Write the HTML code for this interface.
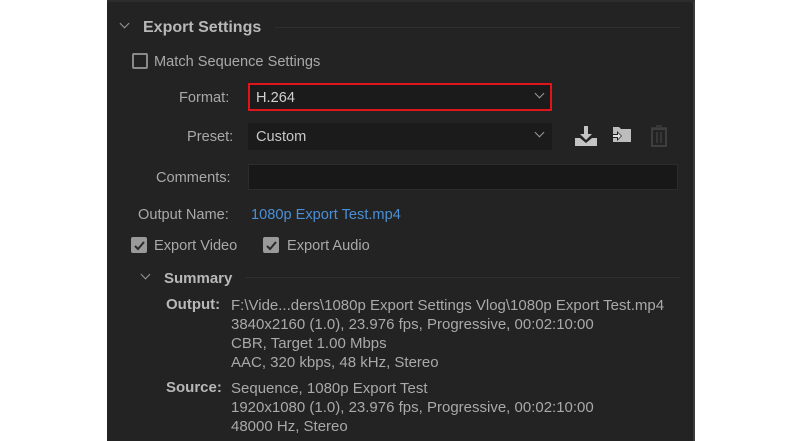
<!DOCTYPE html>
<html><head><meta charset="utf-8"><style>
*{margin:0;padding:0;box-sizing:border-box}
body{width:800px;height:441px;background:#fff;position:relative;overflow:hidden;font-family:"Liberation Sans",sans-serif;}
#p{position:absolute;left:107px;top:0;width:588px;height:441px;background:#232323;border-top:2px solid #2c2c2c;border-right:2px solid #3a3a3a}
.t{position:absolute;color:#a9a9a9;font-size:14.6px;white-space:nowrap}
.b{font-weight:bold;color:#b8b8b8}
.box{position:absolute;background:#1b1b1b}
.chev{position:absolute;width:7px;height:7px;border-right:1.5px solid #999;border-bottom:1.5px solid #999;transform:rotate(45deg)}
.cb{position:absolute;width:16px;height:16px;border:2px solid #8a8a8a;border-radius:2px}
.cbf{background:#9a9a9a;border-color:#9a9a9a}
.hl{position:absolute;height:1px;background:#2f2f2f}
</style></head><body>
<div id="p"></div>
<div class="chev" style="left:121px;top:20px"></div>
<div class="t b" style="left:143px;top:19px;font-size:16px">Export Settings</div>
<div class="hl" style="left:275px;top:27px;width:405px"></div>
<div class="cb" style="left:132px;top:53px"></div>
<div class="t" style="left:154px;top:54px">Match Sequence Settings</div>
<div class="t" style="left:179px;top:90px">Format:</div>
<div class="box" style="left:248px;top:83px;width:304px;height:28px;border:2px solid #e0151c"></div>
<div class="t" style="left:256px;top:90px;color:#d0d0d0">H.264</div>
<div class="chev" style="left:536px;top:90px"></div>
<div class="t" style="left:187px;top:129px">Preset:</div>
<div class="box" style="left:248px;top:123px;width:304px;height:27px"></div>
<div class="t" style="left:256px;top:129px;color:#c8c8c8">Custom</div>
<div class="chev" style="left:536px;top:129px"></div>
<svg style="position:absolute;left:574px;top:125px" width="24" height="22" viewBox="0 0 24 22"><path d="M10 1h4v8h4l-6 6-6-6h4z" fill="#c4c4c4"/><path d="M1 13h5l6 5 6-5h5v8H1z" fill="#c4c4c4"/></svg>
<svg style="position:absolute;left:611px;top:125px" width="22" height="20" viewBox="0 0 22 20"><path d="M2 2h6l2 2h10v13H2z" fill="#bdbdbd"/><path d="M1 9h5V6l5 5-5 5v-3H1z" fill="#232323"/><path d="M2 10h5V8l3 3-3 3v-2H2z" fill="#e0e0e0"/></svg>
<svg style="position:absolute;left:650px;top:125px" width="18" height="22" viewBox="0 0 18 22"><rect x="2" y="4" width="14" height="17" fill="none" stroke="#3e3e3e" stroke-width="2"/><path d="M1 3h16M6 1h6M7 7v11M11 7v11" stroke="#3e3e3e" stroke-width="1.5"/></svg>
<div class="t" style="left:156px;top:170px">Comments:</div>
<div class="box" style="left:248px;top:164px;width:430px;height:26px;background:#181818;border:1px solid #2c2c2c"></div>
<div class="t" style="left:138px;top:207px">Output Name:</div>
<div class="t" style="left:251px;top:207px;color:#4a8fd6">1080p Export Test.mp4</div>
<div class="cb cbf" style="left:131px;top:237px"></div>
<svg style="position:absolute;left:133px;top:239px" width="13" height="13"><path d="M2 7l3 3 6-7" stroke="#2a2a2a" stroke-width="2" fill="none"/></svg>
<div class="t" style="left:154px;top:238px">Export Video</div>
<div class="cb cbf" style="left:263px;top:237px"></div>
<svg style="position:absolute;left:265px;top:239px" width="13" height="13"><path d="M2 7l3 3 6-7" stroke="#2a2a2a" stroke-width="2" fill="none"/></svg>
<div class="t" style="left:287px;top:238px">Export Audio</div>
<div class="chev" style="left:142px;top:271px"></div>
<div class="t b" style="left:164px;top:270px;font-size:15px">Summary</div>
<div class="hl" style="left:245px;top:277px;width:435px"></div>
<div class="t b" style="left:166px;top:296px;font-size:15px">Output:</div>
<div class="t" style="left:231px;top:296px;line-height:19px;font-size:15px">F:\Vide...ders\1080p Export Settings Vlog\1080p Export Test.mp4<br>3840x2160 (1.0), 23.976 fps, Progressive, 00:02:10:00<br>CBR, Target 1.00 Mbps<br>AAC, 320 kbps, 48 kHz, Stereo</div>
<div class="t b" style="left:166px;top:379px;font-size:15px">Source:</div>
<div class="t" style="left:231px;top:379px;line-height:19px;font-size:15px">Sequence, 1080p Export Test<br>1920x1080 (1.0), 23.976 fps, Progressive, 00:02:10:00<br>48000 Hz, Stereo</div>
</body></html>
